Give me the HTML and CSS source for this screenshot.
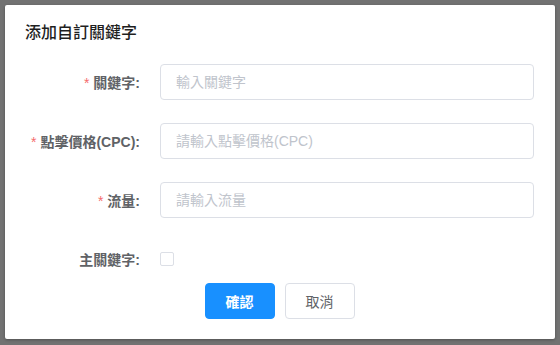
FILE: index.html
```html
<!DOCTYPE html>
<html lang="zh-Hant">
<head>
<meta charset="UTF-8">
<meta name="viewport" content="width=device-width, initial-scale=1.0">
<link rel="stylesheet" href="styles.css">
</head>
<body>

<div class="dialog">
  <div class="dialog-header">
    <span class="dialog-title">添加自訂關鍵字</span>
  </div>
  <!-- Keyword form -->
  <form class="form" action="#" method="post">
    <div class="form-item">
      <label class="form-label required" for="keyword">關鍵字:</label>
      <input class="form-input" type="text" id="keyword" placeholder="輸入關鍵字" autocomplete="off">
    </div>
    <div class="form-item">
      <label class="form-label required" for="cpc">點擊價格(CPC):</label>
      <input class="form-input" type="text" id="cpc" placeholder="請輸入點擊價格(CPC)" autocomplete="off">
    </div>
    <div class="form-item">
      <label class="form-label required" for="traffic">流量:</label>
      <input class="form-input" type="text" id="traffic" placeholder="請輸入流量" autocomplete="off">
    </div>
    <div class="form-item form-item-last">
      <label class="form-label" for="main">主關鍵字:</label>
      <span class="checkbox"></span>
    </div>
    <div class="form-footer">
      <button type="button" class="button button-primary">確認</button>
      <button type="button" class="button">取消</button>
    </div>
  </form>
</div>

</body>
</html>
```

FILE: styles.css
```css
body {
  font-family: "Liberation Sans", "Noto Sans CJK TC", sans-serif;
  margin: 0;
  padding: 5px;
  background-color: #727272;
}
.dialog {
  width: 550px;
  background-color: #fff;
  border-radius: 2px;
  box-shadow: 0 1px 3px rgba(0, 0, 0, 0.3);
  padding-bottom: 20px;
}
.dialog-header {
  padding: 16px 20px 0;
}
.dialog-title {
  font-size: 16px;
  line-height: 24px;
  font-weight: 500;
  color: #1f1f1f;
}
.form {
  margin: 19px 21px 0 20px;
}
.form-item {
  display: flex;
  align-items: center;
  height: 36px;
  margin-bottom: 23px;
}
.form-item-last {
  margin-bottom: 6px;
}
.form-label {
  width: 135px;
  padding-right: 20px;
  box-sizing: border-box;
  text-align: right;
  font-size: 14px;
  font-weight: 700;
  color: #606266;
}
.required::before {
  content: "*";
  color: #f56c6c;
  margin-right: 4px;
  font-weight: 400;
}
.form-input {
  flex: 1;
  height: 36px;
  padding: 0 15px;
  border: 1px solid #dcdfe6;
  border-radius: 4px;
  box-sizing: border-box;
  font-family: inherit;
  font-size: 14px;
  color: #606266;
  outline: none;
}
.form-input::placeholder {
  color: #c0c4cc;
}
.checkbox {
  width: 14px;
  height: 14px;
  border: 1px solid #dcdfe6;
  border-radius: 2px;
  box-sizing: border-box;
}
.form-footer {
  display: flex;
  justify-content: center;
  gap: 10px;
}
.button {
  width: 70px;
  height: 36px;
  border: 1px solid #dcdfe6;
  border-radius: 4px;
  background-color: #fff;
  color: #606266;
  font-family: inherit;
  font-size: 14px;
  cursor: pointer;
}
.button-primary {
  background-color: #1890ff;
  border-color: #1890ff;
  color: #fff;
  font-weight: 700;
}
```
